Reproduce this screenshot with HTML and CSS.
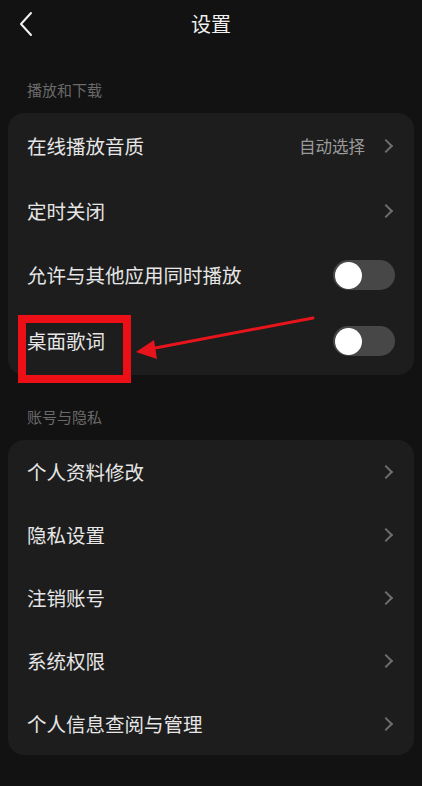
FILE: index.html
```html
<!DOCTYPE html>
<html lang="zh-CN">
<head>
<meta charset="utf-8">
<title>设置</title>
<link rel="stylesheet" href="styles.css">
</head>
<body>
<div class="page">
  <header class="header">
    <svg class="back" width="16" height="26" viewBox="0 0 16 26"><path d="M13 2 L3 13 L13 24" fill="none" stroke="#f2f2f2" stroke-width="2" stroke-linecap="round" stroke-linejoin="round"/></svg>
    <h1 class="title">设置</h1>
  </header>

  <div class="section-label">播放和下载</div>
  <div class="card card-play">
    <div class="row"><span class="label">在线播放音质</span><span class="value">自动选择</span><span class="chev"></span></div>
    <div class="row"><span class="label">定时关闭</span><span class="chev"></span></div>
    <div class="row"><span class="label">允许与其他应用同时播放</span><span class="toggle"><span class="knob"></span></span></div>
    <div class="row"><span class="label">桌面歌词</span><span class="toggle"><span class="knob"></span></span></div>
  </div>

  <div class="section-label">账号与隐私</div>
  <div class="card card-account">
    <div class="row"><span class="label">个人资料修改</span><span class="chev"></span></div>
    <div class="row"><span class="label">隐私设置</span><span class="chev"></span></div>
    <div class="row"><span class="label">注销账号</span><span class="chev"></span></div>
    <div class="row"><span class="label">系统权限</span><span class="chev"></span></div>
    <div class="row"><span class="label">个人信息查阅与管理</span><span class="chev"></span></div>
  </div>

  <div class="highlight-box"></div>
  <svg class="arrow" width="422" height="786" viewBox="0 0 422 786">
    <line x1="313" y1="318" x2="150" y2="349" stroke="#e8141b" stroke-width="3" stroke-linecap="round"/>
    <polygon points="136,352 154,340 157,359" fill="#e8141b"/>
  </svg>
</div>
</body>
</html>
```
FILE: styles.css
```css
html, body {
  margin: 0;
  padding: 0;
  background: #121212;
}
body {
  font-family: "Noto Sans CJK SC", "Noto Sans", sans-serif;
  color: #e8e8e8;
}
.page {
  position: relative;
  width: 422px;
  height: 786px;
  overflow: hidden;
}
.header {
  position: relative;
  height: 48px;
  display: flex;
  align-items: center;
  justify-content: center;
}
.back {
  position: absolute;
  left: 18px;
  top: 11px;
}
.title {
  margin: 0;
  font-size: 20px;
  font-weight: 400;
  line-height: 48px;
  color: #f0f0f0;
}
.section-label {
  padding: 32px 0 13px 27px;
  font-size: 15px;
  line-height: 20px;
  color: #6a6a6a;
}
.card {
  margin: 0 8px;
  background: #1d1d1d;
  border-radius: 16px;
  display: flex;
  flex-direction: column;
}
.card-play .row {
  height: 64px;
}
.card-play .row:first-child {
  height: 66px;
}
.card-play .row:last-child {
  height: 68px;
}
.card-account .row {
  height: 63px;
}
.row {
  display: flex;
  align-items: center;
  padding: 0 19px 0 19px;
}
.label {
  flex: 1;
  font-size: 19.5px;
  line-height: 24px;
  color: #e6e6e6;
}
.value {
  font-size: 16.5px;
  color: #9a9a9a;
  margin-right: 16px;
}
.chev {
  width: 8px;
  height: 8px;
  border-top: 2px solid #6e6e6e;
  border-right: 2px solid #6e6e6e;
  transform: rotate(45deg);
  margin-right: 4px;
}
.toggle {
  width: 62px;
  height: 30px;
  border-radius: 15px;
  background: #474747;
  display: flex;
  align-items: center;
  padding-left: 2px;
  box-sizing: border-box;
}
.knob {
  width: 27px;
  height: 27px;
  border-radius: 50%;
  background: #ffffff;
}
.highlight-box {
  position: absolute;
  left: 18px;
  top: 315px;
  width: 113px;
  height: 68px;
  box-sizing: border-box;
  border: 8px solid #ec0f16;
}
.arrow {
  position: absolute;
  left: 0;
  top: 0;
  pointer-events: none;
}
```
